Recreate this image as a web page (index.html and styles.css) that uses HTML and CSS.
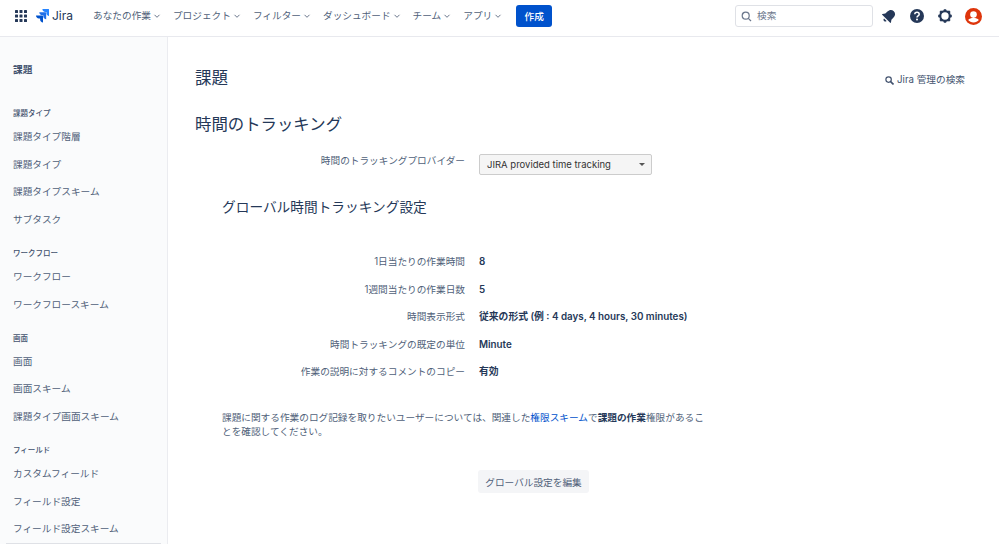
FILE: index.html
```html
<!DOCTYPE html>
<html lang="ja">
<head>
<meta charset="utf-8">
<title>時間のトラッキング</title>
<link rel="stylesheet" href="styles.css">
</head>
<body>
<header class="topbar">
  <svg class="apps" width="14" height="14" viewBox="0 0 14 14" fill="#253858"><rect x="1" y="1" width="3" height="3" rx=".6"/><rect x="5.5" y="1" width="3" height="3" rx=".6"/><rect x="10" y="1" width="3" height="3" rx=".6"/><rect x="1" y="5.5" width="3" height="3" rx=".6"/><rect x="5.5" y="5.5" width="3" height="3" rx=".6"/><rect x="10" y="5.5" width="3" height="3" rx=".6"/><rect x="1" y="10" width="3" height="3" rx=".6"/><rect x="5.5" y="10" width="3" height="3" rx=".6"/><rect x="10" y="10" width="3" height="3" rx=".6"/></svg>
  <div class="logo">
    <svg width="13" height="14" viewBox="0 0 13 14"><path fill="#2684ff" d="M12.600 0H6.400c0 1.600 1.300 2.900 2.900 2.900h1.100V4c0 1.600 1.300 2.900 2.600 2.900V.7c0-.4 0-.7-.4-.7z"/><path fill="#1f6fe8" d="M9.500 3.300H3.300c0 1.600 1.300 2.900 2.900 2.900h1.100v1.100c0 1.600 1.300 2.900 2.900 2.900V4c0-.4-.3-.7-.7-.7z"/><path fill="#0052cc" d="M6.300 6.500H0c0 1.600 1.300 2.900 2.900 2.900h1.200v1.100c0 1.600 1.300 2.900 2.900 2.900V7.200c0-.4-.3-.7-.7-.7z"/></svg>
    <span class="logo-text">Jira</span>
  </div>
  <nav class="menu">
    <span class="menu-item">あなたの作業<svg class="chev" viewBox="0 0 8 8"><path d="M1.500 2.800 4 5.300l2.500-2.500"/></svg></span>
    <span class="menu-item">プロジェクト<svg class="chev" viewBox="0 0 8 8"><path d="M1.500 2.800 4 5.300l2.500-2.500"/></svg></span>
    <span class="menu-item">フィルター<svg class="chev" viewBox="0 0 8 8"><path d="M1.500 2.800 4 5.300l2.500-2.500"/></svg></span>
    <span class="menu-item">ダッシュボード<svg class="chev" viewBox="0 0 8 8"><path d="M1.500 2.800 4 5.300l2.500-2.500"/></svg></span>
    <span class="menu-item">チーム<svg class="chev" viewBox="0 0 8 8"><path d="M1.500 2.800 4 5.300l2.500-2.500"/></svg></span>
    <span class="menu-item">アプリ<svg class="chev" viewBox="0 0 8 8"><path d="M1.500 2.800 4 5.300l2.500-2.500"/></svg></span>
  </nav>
  <button class="create">作成</button>
  <div class="top-right">
    <div class="search">
      <svg width="11" height="11" viewBox="0 0 11 11" fill="none" stroke="#6b778c" stroke-width="1.200"><circle cx="4.700" cy="4.700" r="3.500"/><path d="M7.300 7.300 10 10"/></svg>
      <span>検索</span>
    </div>
    <svg class="ticon bell" width="16" height="16" viewBox="0 0 16 16" fill="#253858"><g transform="rotate(45 8 8)"><path d="M8 1.200c2.700 0 4.300 2 4.300 4.700v3l1.700 2.300v.8H2v-.8l1.700-2.300v-3C3.700 3.200 5.300 1.200 8 1.200z"/><path d="M6.200 13.200h3.600c0 1-.8 1.800-1.800 1.800s-1.800-.8-1.800-1.800z"/></g></svg>
    <svg class="ticon" width="16" height="16" viewBox="0 0 16 16"><circle cx="8" cy="8" r="7" fill="#253858"/><path d="M5.800 6.300c0-1.200 1-2 2.200-2s2.200.8 2.200 2c0 1.700-2.200 1.600-2.200 3.300" fill="none" stroke="#fff" stroke-width="1.500"/><circle cx="8" cy="11.600" r="1" fill="#fff"/></svg>
    <svg class="ticon" width="16" height="16" viewBox="0 0 16 16"><circle cx="8" cy="8" r="4.800" fill="none" stroke="#253858" stroke-width="2.200"/><g stroke="#253858" stroke-width="2.400"><path d="M8 1.200v2M8 12.800v2M1.200 8h2M12.800 8h2M3.200 3.200l1.400 1.400M11.400 11.400l1.400 1.400M3.200 12.800l1.400-1.400M11.400 4.600l1.400-1.400"/></g></svg>
    <svg class="avatar" width="17" height="17" viewBox="0 0 17 17"><circle cx="8.500" cy="8.500" r="8.500" fill="#de350b"/><circle cx="8.500" cy="6.600" r="3.300" fill="#fff"/><path d="M3.200 12c1-1.500 3-2 5.300-2s4.300.5 5.300 2c-1.200 1.600-3.100 2.500-5.300 2.500S4.400 13.600 3.200 12z" fill="#fff"/></svg>
  </div>
</header>
<div class="page">
  <aside class="sidebar">
    <h2 class="side-title">課題</h2>
    <h3 class="side-head first">課題タイプ</h3>
    <a class="side-link">課題タイプ階層</a>
    <a class="side-link">課題タイプ</a>
    <a class="side-link">課題タイプスキーム</a>
    <a class="side-link">サブタスク</a>
    <h3 class="side-head">ワークフロー</h3>
    <a class="side-link">ワークフロー</a>
    <a class="side-link">ワークフロースキーム</a>
    <h3 class="side-head">画面</h3>
    <a class="side-link">画面</a>
    <a class="side-link">画面スキーム</a>
    <a class="side-link">課題タイプ画面スキーム</a>
    <h3 class="side-head">フィールド</h3>
    <a class="side-link">カスタムフィールド</a>
    <a class="side-link">フィールド設定</a>
    <a class="side-link">フィールド設定スキーム</a>
    <div class="side-rule"></div>
  </aside>
  <main class="content">
    <div class="page-head">
      <h1 class="page-title">課題</h1>
      <div class="admin-search">
        <svg width="9" height="9" viewBox="0 0 9 9" fill="none" stroke="#42526e" stroke-width="1.200"><circle cx="3.600" cy="3.600" r="2.700"/><path d="M5.600 5.600 8.500 8.500" stroke-width="1.600"/></svg>
        <span>Jira 管理の検索</span>
      </div>
    </div>
    <h2 class="section-title">時間のトラッキング</h2>
    <div class="provider">
      <span class="label">時間のトラッキングプロバイダー</span>
      <div class="select"><span>JIRA provided time tracking</span><i class="caret"></i></div>
    </div>
    <div class="inner">
      <h3 class="sub-title">グローバル時間トラッキング設定</h3>
      <dl class="settings">
        <dt class="label">1日当たりの作業時間</dt><dd class="value">8</dd>
        <dt class="label">1週間当たりの作業日数</dt><dd class="value">5</dd>
        <dt class="label">時間表示形式</dt><dd class="value">従来の形式 (例 : 4 days, 4 hours, 30 minutes)</dd>
        <dt class="label">時間トラッキングの既定の単位</dt><dd class="value">Minute</dd>
        <dt class="label">作業の説明に対するコメントのコピー</dt><dd class="value">有効</dd>
      </dl>
      <p class="note">課題に関する作業のログ記録を取りたいユーザーについては、関連した<a class="link">権限スキーム</a>で<strong>課題の作業</strong>権限があることを確認してください。</p>
      <button class="edit">グローバル設定を編集</button>
    </div>
  </main>
</div>
</body>
</html>
```
FILE: styles.css
```css
* { box-sizing: border-box; }
html, body { margin: 0; height: 544px; overflow: hidden; }
body {
  background: #fff;
  color: #42526e;
  font-family: Inter, "Noto Sans CJK JP", sans-serif;
  font-size: 9.66px;
  line-height: 14px;
}
h1, h2, h3, p, dl, dd { margin: 0; font-weight: 400; }

.topbar {
  display: flex;
  align-items: center;
  height: 37px;
  padding: 0 17px 4px 0;
  border-bottom: 1px solid #e8e9ee;
}
.apps { margin-left: 14px; flex: none; }
.logo { display: flex; align-items: center; gap: 3px; margin-left: 8px; color: #253858; }
.logo-text { font-size: 12px; }
.menu { display: flex; gap: 12px; margin-left: 20px; }
.menu-item { display: flex; align-items: center; gap: 2px; white-space: nowrap; color: #505f79; }
.chev { width: 8px; height: 8px; fill: none; stroke: #6b778c; stroke-width: 1; }
.create {
  width: 36px;
  height: 22px;
  margin-left: 14px;
  padding: 0;
  border: 0;
  border-radius: 3px;
  background: #0052cc;
  color: #fff;
  font: 500 9.660px Inter, "Noto Sans CJK JP", sans-serif;
}
.top-right { display: flex; align-items: center; margin-left: auto; }
.search {
  display: flex;
  align-items: center;
  gap: 5px;
  width: 138px;
  height: 22px;
  padding-left: 5px;
  border: 1px solid #dfe1e6;
  border-radius: 3px;
  color: #6b778c;
}
.ticon { margin-left: 12px; }
.bell { margin-left: 8px; }
.avatar { margin-left: 12px; }

.page { display: flex; height: 507px; }
.sidebar {
  position: relative;
  flex: none;
  width: 168px;
  padding: 26px 13px 0;
  background: #fafbfc;
  border-right: 1px solid #ebecf0;
  overflow: hidden;
}
.side-title { font-size: 9.660px; font-weight: 700; color: #42526e; }
.side-head { margin: 8.300px 0 11px; font-size: 7.500px; line-height: 10px; font-weight: 500; color: #42526e; }
.side-head.first { margin-top: 32px; }
.side-link { display: block; height: 27.700px; line-height: 14px; color: #505f79; }
.side-rule { position: absolute; left: 6px; right: 6px; bottom: 0; height: 1px; background: #dfe1e6; }

.content { flex: 1; padding: 0 34px 0 27px; }
.page-head { display: flex; justify-content: space-between; align-items: center; height: 46px; margin-top: 18px; }
.page-title { font-size: 16.500px; line-height: 24px; color: #253858; }
.admin-search { display: flex; align-items: center; gap: 3px; margin-top: 4px; color: #42526e; }
.section-title { margin-top: 11px; font-size: 16.400px; line-height: 24px; color: #253858; }
.provider { display: grid; grid-template-columns: 270px auto; column-gap: 14px; justify-content: start; align-items: center; margin-top: 18px; }
.label { margin: 0; text-align: right; color: #505f79; }
.provider .label { align-self: start; margin-top: 0; }
.select {
  display: flex;
  align-items: center;
  justify-content: space-between;
  width: 173px;
  height: 21px;
  padding: 0 6px 0 7px;
  border: 1px solid #ccc;
  border-radius: 2px;
  background: #f5f5f5;
  font-size: 9.500px;
  color: #333;
}
.caret { width: 0; height: 0; border: 3px solid transparent; border-top: 3px solid #555; border-bottom: 0; }
.inner { padding-left: 27px; }
.sub-title { margin-top: 22px; font-size: 13.700px; line-height: 20px; color: #253858; }
.settings { display: grid; grid-template-columns: 243px auto; column-gap: 14px; row-gap: 13.500px; justify-content: start; margin-top: 38px; }
.value { font-weight: 600; font-size: 9.800px; color: #253858; }
.note { width: 486px; margin-top: 32px; line-height: 14px; color: #505f79; }
.link { color: #0052cc; }
.note strong { color: #253858; }
.edit {
  display: block;
  width: 111px;
  height: 23px;
  margin: 31px 0 0 256px;
  padding: 0;
  border: 0;
  border-radius: 3px;
  background: #f4f5f7;
  color: #505f79;
  font: 400 9.660px Inter, "Noto Sans CJK JP", sans-serif;
}
```
